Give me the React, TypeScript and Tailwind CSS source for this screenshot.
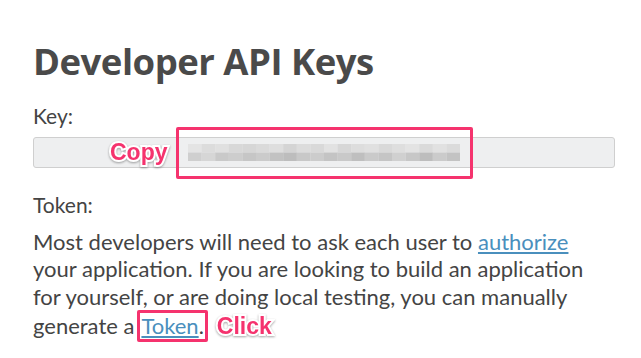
import React from 'react';

const BLUR_TOP = ['#e4e4e4', '#dcdcdc', '#e0e0e0', '#d8d8d8', '#d6d6d6', '#dadada', '#dedede', '#d4d4d4', '#dcdcdc', '#d9d9d9', '#e2e2e2', '#d7d7d7', '#dddddd', '#e0e0e0', '#d9d9d9', '#dedede', '#e3e3e3', '#dadada', '#e1e1e1', '#dbdbdb'];
const BLUR_BOTTOM = ['#cfcfcf', '#d6d6d6', '#c9c9c9', '#cdcdcd', '#c6c6c6', '#cbcbcb', '#c2c2c2', '#bdbdbd', '#c8c8c8', '#cccccc', '#c4c4c4', '#c9c9c9', '#bfbfbf', '#cacaca', '#c5c5c5', '#d0d0d0', '#c7c7c7', '#bdbdbd', '#cbcbcb', '#c3c3c3'];

// pixelated (redacted) key value
const BlurredKey: React.FC = () => (
  <svg width="272" height="17" viewBox="0 0 272 17">
    {BLUR_TOP.map((c, i) => (
      <rect key={'t' + i} x={i * 13.6} y={0} width={13.7} height={8.5} fill={c} />
    ))}
    {BLUR_BOTTOM.map((c, i) => (
      <rect key={'b' + i} x={i * 13.6} y={8.5} width={13.7} height={8.5} fill={c} />
    ))}
  </svg>
);

const Callout: React.FC<{ children: React.ReactNode; className?: string }> = ({ children, className }) => (
  <span
    className={`inline-block font-['Liberation_Sans',Arial,sans-serif] font-bold text-[23px] leading-none text-[#f5336e] [paint-order:stroke_fill] [-webkit-text-stroke:4px_white] [filter:drop-shadow(0_1px_1px_rgba(0,0,0,0.35))] ${className ?? ''}`}
  >
    {children}
  </span>
);

const App: React.FC = () => {
  return (
    <div className="w-[641px] h-[358px] bg-white overflow-hidden font-['Lato',sans-serif] text-[#444]">
      <div className="pl-[33px] pr-[26px] pt-[38px]">
        <h1 className="font-['Open_Sans',sans-serif] font-bold text-[36.5px] leading-[46px] text-[#4a4a4a] tracking-[-0.5px]">
          Developer API Keys
        </h1>

        {/* KEY */}
        <div className="mt-[19px] text-[21px] leading-[26px]">Key:</div>
        <div className="mt-[8px] h-[31px] rounded-[3px] border border-[#cfcfcf] bg-[#eeeff0] flex items-center pl-[76px] gap-[8px]">
          <Callout>Copy</Callout>
          <div className="-my-[11px] h-[52px] w-[297px] border-[3px] border-[#f5336e] rounded-[2px] flex items-center pl-[9px]">
            <BlurredKey />
          </div>
        </div>

        {/* TOKEN */}
        <div className="mt-[24px] text-[21px] leading-[26px]">Token:</div>
        <p className="mt-[10px] pr-[14px] text-[22px] leading-[27.4px]">
          Most developers will need to ask each user to{' '}
          <a className="text-[#4a8fbd] underline underline-offset-2">authorize</a> your application. If you are
          looking to build an application for yourself, or are doing local testing, you can manually generate a
          <span className="inline-block ml-[3px] border-[3px] border-[#f5336e] rounded-[2px] leading-[26px] px-[1px]">
            <a className="text-[#4a8fbd] underline underline-offset-2">Token</a>.
          </span>
          <Callout className="ml-[9px]">Click</Callout>
        </p>
      </div>
    </div>
  );
};

export default App;
